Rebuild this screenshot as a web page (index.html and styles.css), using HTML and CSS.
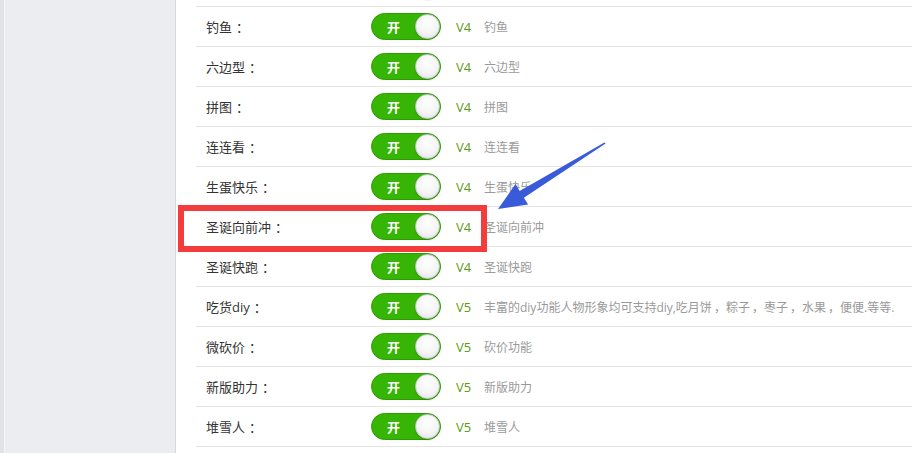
FILE: index.html
```html
<!DOCTYPE html>
<html lang="zh-CN">
<head>
<meta charset="utf-8">
<title>游戏开关</title>
<link rel="stylesheet" href="styles.css">
</head>
<body>
<div class="page">
  <aside class="sidebar"><div class="edge"></div></aside>
  <main class="main">
    <ul class="list">
      <li class="row"><span class="label"></span><span class="switch"><b></b><i></i></span><span class="ver"></span><span class="desc"></span></li>
      <li class="row"><span class="label">钓鱼<span class="colon">：</span></span><span class="switch"><b>开</b><i></i></span><span class="ver">V4</span><span class="desc">钓鱼</span></li>
      <li class="row"><span class="label">六边型<span class="colon">：</span></span><span class="switch"><b>开</b><i></i></span><span class="ver">V4</span><span class="desc">六边型</span></li>
      <li class="row"><span class="label">拼图<span class="colon">：</span></span><span class="switch"><b>开</b><i></i></span><span class="ver">V4</span><span class="desc">拼图</span></li>
      <li class="row"><span class="label">连连看<span class="colon">：</span></span><span class="switch"><b>开</b><i></i></span><span class="ver">V4</span><span class="desc">连连看</span></li>
      <li class="row"><span class="label">生蛋快乐<span class="colon">：</span></span><span class="switch"><b>开</b><i></i></span><span class="ver">V4</span><span class="desc">生蛋快乐</span></li>
      <li class="row"><span class="label">圣诞向前冲<span class="colon">：</span></span><span class="switch"><b>开</b><i></i></span><span class="ver">V4</span><span class="desc">圣诞向前冲</span></li>
      <li class="row"><span class="label">圣诞快跑<span class="colon">：</span></span><span class="switch"><b>开</b><i></i></span><span class="ver">V4</span><span class="desc">圣诞快跑</span></li>
      <li class="row"><span class="label">吃货diy<span class="colon">：</span></span><span class="switch"><b>开</b><i></i></span><span class="ver">V5</span><span class="desc">丰富的diy功能人物形象均可支持diy,吃月饼<span class="comma">，</span>粽子<span class="comma">，</span>枣子<span class="comma">，</span>水果<span class="comma">，</span>便便.等等.</span></li>
      <li class="row"><span class="label">微砍价<span class="colon">：</span></span><span class="switch"><b>开</b><i></i></span><span class="ver">V5</span><span class="desc">砍价功能</span></li>
      <li class="row"><span class="label">新版助力<span class="colon">：</span></span><span class="switch"><b>开</b><i></i></span><span class="ver">V5</span><span class="desc">新版助力</span></li>
      <li class="row"><span class="label">堆雪人<span class="colon">：</span></span><span class="switch"><b>开</b><i></i></span><span class="ver">V5</span><span class="desc">堆雪人</span></li>
    </ul>
  </main>
  <div class="mark-box"></div>
  <svg class="mark-arrow" width="912" height="453" viewBox="0 0 912 453">
    <polygon points="605.6,143.6 523.9,197.7 528.1,204.5 498,209 515.5,184.1 519.7,190.9 604.4,142.4" fill="#3a5bd9"/>
  </svg>
</div>
</body>
</html>
```
FILE: styles.css
```css
html, body {
  margin: 0;
  padding: 0;
  background: #ffffff;
  overflow: hidden;
}
.page {
  display: flex;
  width: 912px;
  height: 453px;
  overflow: hidden;
  font-family: "Open Sans", "Noto Sans CJK SC", sans-serif;
  position: relative;
}
.sidebar {
  width: 175px;
  flex: none;
  background: #ecedf1;
  border-right: 1px solid #d6d9de;
  position: relative;
}
.sidebar .edge {
  width: 4px;
  height: 100%;
  background: #e1e3e7;
  border-right: 1px solid #f6f7f9;
}
.main {
  flex: 1;
  padding-left: 20px;
  min-width: 0;
}
.list {
  list-style: none;
  margin: -33px 0 0 0;
  padding: 0;
}
.row {
  display: flex;
  align-items: center;
  height: 39px;
  border-bottom: 1px solid #e3e3e3;
  padding-left: 10px;
  white-space: nowrap;
}
.label {
  width: 165px;
  flex: none;
  font-size: 13px;
  color: #333333;
}
.colon {
  font-family: "Noto Sans CJK SC", sans-serif;
  margin-left: 4px;
}
.comma {
  font-family: "Noto Sans CJK SC", sans-serif;
  margin-left: 2px;
}
.switch {
  flex: none;
  box-sizing: border-box;
  width: 70px;
  height: 27px;
  border-radius: 14px;
  background: #37b505;
  border: 1px solid #2c9e00;
  display: flex;
  align-items: center;
  justify-content: space-between;
  padding: 0 0 0 15px;
}
.switch b {
  color: #ffffff;
  font-size: 13px;
  font-weight: bold;
}
.switch i {
  width: 25px;
  height: 25px;
  box-sizing: border-box;
  border-radius: 50%;
  background: radial-gradient(circle at 50% 35%, #ffffff 0%, #f4f4f4 55%, #dedede 100%);
  border: 1px solid #c9c9c9;
  box-shadow: 0 1px 2px rgba(0,0,0,0.2);
}
.ver {
  flex: none;
  width: 28px;
  margin-left: 15px;
  font-size: 13px;
  color: #5c9c10;
}
.desc {
  font-size: 12px;
  color: #9a9a9a;
}
.mark-box {
  position: absolute;
  left: 178px;
  top: 205px;
  width: 309px;
  height: 47px;
  box-sizing: border-box;
  border: 6px solid #f43c3c;
}
.mark-arrow {
  position: absolute;
  left: 0;
  top: 0;
}
```
